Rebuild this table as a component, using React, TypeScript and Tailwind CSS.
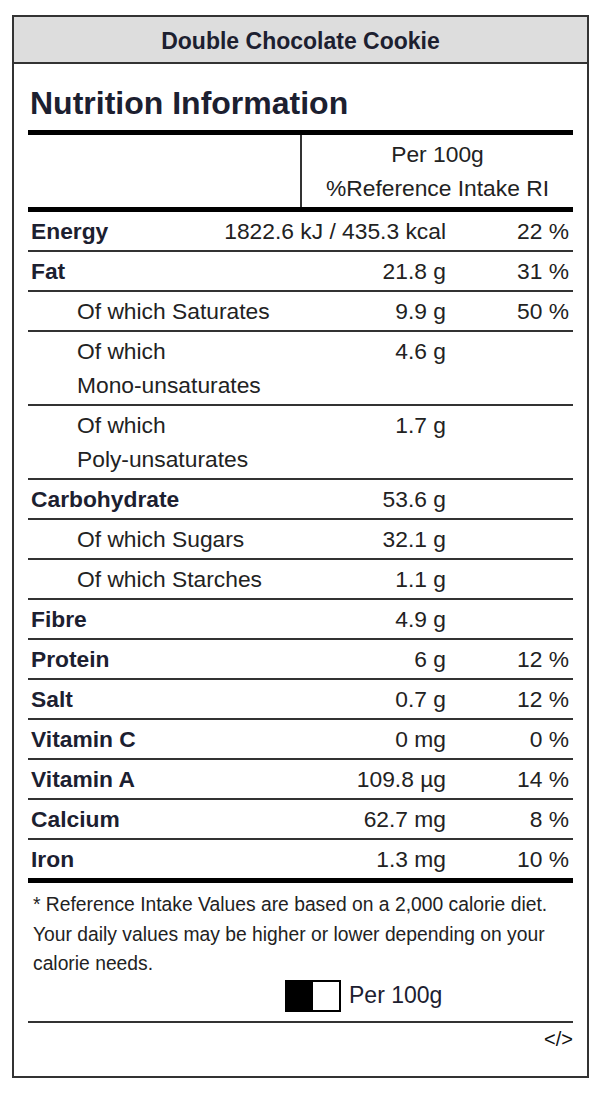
type Row = {
  label: string;
  sub?: boolean;
  value: string;
  ri?: string;
};

const rows: Row[] = [
  { label: 'Energy', value: '1822.6 kJ / 435.3 kcal', ri: '22 %' },
  { label: 'Fat', value: '21.8 g', ri: '31 %' },
  { label: 'Of which Saturates', sub: true, value: '9.9 g', ri: '50 %' },
  { label: 'Of which Mono-unsaturates', sub: true, value: '4.6 g' },
  { label: 'Of which Poly-unsaturates', sub: true, value: '1.7 g' },
  { label: 'Carbohydrate', value: '53.6 g' },
  { label: 'Of which Sugars', sub: true, value: '32.1 g' },
  { label: 'Of which Starches', sub: true, value: '1.1 g' },
  { label: 'Fibre', value: '4.9 g' },
  { label: 'Protein', value: '6 g', ri: '12 %' },
  { label: 'Salt', value: '0.7 g', ri: '12 %' },
  { label: 'Vitamin C', value: '0 mg', ri: '0 %' },
  { label: 'Vitamin A', value: '109.8 µg', ri: '14 %' },
  { label: 'Calcium', value: '62.7 mg', ri: '8 %' },
  { label: 'Iron', value: '1.3 mg', ri: '10 %' },
];

function NutritionRow({ row, last }: { row: Row; last: boolean }) {
  return (
    <div
      className={`flex items-start py-[2px] leading-[34px] ${
        last ? '' : 'border-b-2 border-[#333]'
      }`}
    >
      <div
        className={`flex-1 min-w-0 ${
          row.sub ? 'pl-[49px] text-[#222]' : 'pl-[3px] font-bold text-[#1c2030]'
        }`}
      >
        {row.sub && row.label.length > 20 ? (
          <>
            Of which
            <br />
            {row.label.replace('Of which ', '')}
          </>
        ) : (
          row.label
        )}
      </div>
      <div className="min-w-[146px] shrink-0 text-right whitespace-nowrap text-[#222]">
        {row.value}
      </div>
      <div className="w-[127px] shrink-0 text-right pr-[4px] text-[#222]">{row.ri}</div>
    </div>
  );
}

export default function App() {
  return (
    <div className="min-h-[1093px] bg-white pt-[15px] pl-[12px] font-['Liberation_Sans',Arial,sans-serif]">
      <div className="w-[577px] border-2 border-[#333] bg-white">
        <div className="h-[47px] flex items-center justify-center pt-[3px] bg-[#dddddd] border-b-2 border-[#333]">
          <h1 className="text-[23px] font-bold text-[#1c2030]">Double Chocolate Cookie</h1>
        </div>

        <div className="px-[14px]">
          <h2 className="mt-[20px] mb-[8px] text-[32px] leading-[38px] font-bold text-[#1c2030] pl-[2px]">
            Nutrition Information
          </h2>

          <div className="border-t-[5px] border-black text-[22.8px]">
            <div className="flex border-b-[5px] border-black">
              <div className="w-[272px] shrink-0" />
              <div className="flex-1 border-l-2 border-[#333] py-[2px] text-center leading-[34px] text-[#222]">
                <div>Per 100g</div>
                <div>%Reference Intake RI</div>
              </div>
            </div>

            {rows.map((row, i) => (
              <NutritionRow key={row.label} row={row} last={i === rows.length - 1} />
            ))}
          </div>

          <div className="border-t-[5px] border-black pt-[7px]">
            <p className="pl-[5px] pr-[10px] text-[19.3px] leading-[29.5px] text-[#222]">
              * Reference Intake Values are based on a 2,000 calorie diet. Your daily values may be
              higher or lower depending on your calorie needs.
            </p>

            <div className="flex items-center pl-[257px] h-[34px]">
              <button
                type="button"
                className="w-[56px] h-[32px] border-2 border-black bg-white flex"
                aria-label="Toggle per portion"
              >
                <span className="block w-[26px] h-full bg-black" />
              </button>
              <span className="ml-[8px] text-[23px] text-[#1c2030]">Per 100g</span>
            </div>

            <div className="mt-[8px] border-t-2 border-[#333] flex justify-end pt-[4px] pb-[25px]">
              <span className="text-[20px] leading-[24px] text-[#111]">&lt;/&gt;</span>
            </div>
          </div>
        </div>
      </div>
    </div>
  );
}
